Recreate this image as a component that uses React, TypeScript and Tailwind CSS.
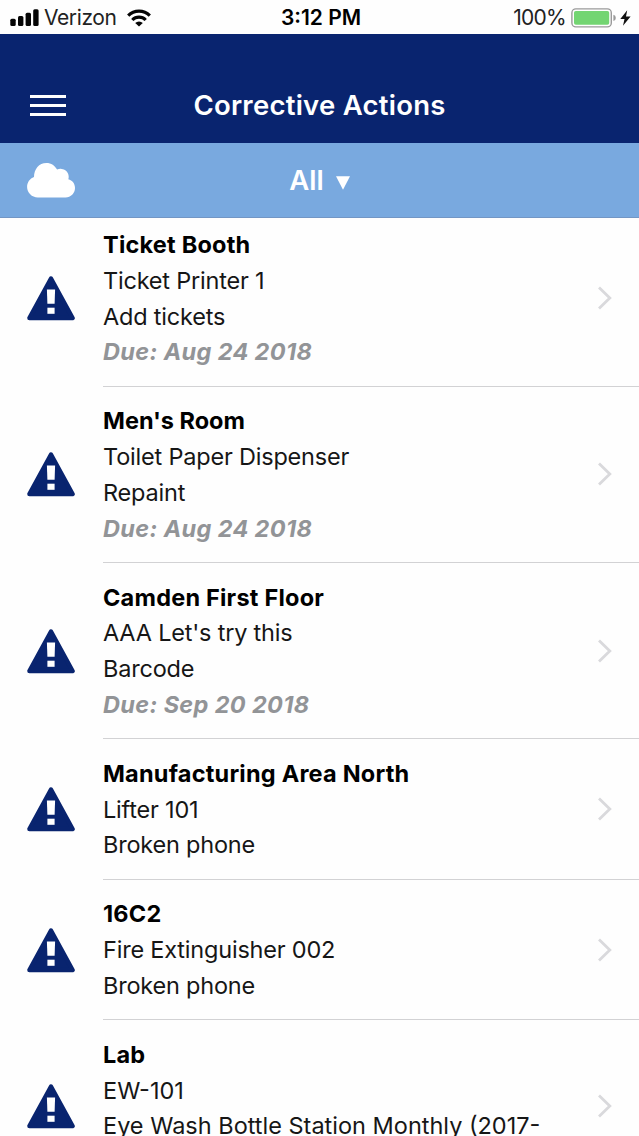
type Action = {
  title: string
  titleTracking?: string
  lines: string[]
  tracking?: string
  due?: string
  height: string
}

const ACTIONS: Action[] = [
  { title: 'Ticket Booth', lines: ['Ticket Printer 1', 'Add tickets'], due: 'Aug 24 2018', height: 'h-[176.25px]' },
  { title: "Men's Room", titleTracking: 'tracking-normal', lines: ['Toilet Paper Dispenser', 'Repaint'], due: 'Aug 24 2018', height: 'h-[176.25px]' },
  { title: 'Camden First Floor', lines: ["AAA Let's try this", 'Barcode'], due: 'Sep 20 2018', height: 'h-[176.25px]' },
  { title: 'Manufacturing Area North', lines: ['Lifter 101', 'Broken phone'], height: 'h-[140.5px]' },
  { title: '16C2', lines: ['Fire Extinguisher 002', 'Broken phone'], height: 'h-[140.5px]' },
  { title: 'Lab', lines: ['EW-101', 'Eye Wash Bottle Station Monthly (2017-'], tracking: 'tracking-normal', height: 'h-[173px]' },
]

function SignalIcon() {
  return (
    <svg width="30" height="18" viewBox="0 0 30 18" fill="#050505">
      <rect x="0.3" y="9.8" width="5.4" height="7.2" rx="1.5" />
      <rect x="8" y="7" width="5.4" height="10" rx="1.5" />
      <rect x="15.6" y="3.8" width="5.4" height="13.2" rx="1.5" />
      <rect x="23.2" y="0.3" width="5.4" height="16.7" rx="1.5" />
    </svg>
  )
}

function WifiIcon() {
  return (
    <svg width="24" height="18" viewBox="0 0 24 18" fill="none" stroke="#050505" strokeWidth="3.2">
      <path d="M1.2 6.6a15.2 15.2 0 0 1 21.6 0" />
      <path d="M5.3 11a9.4 9.4 0 0 1 13.4 0" />
      <path d="M12 17.6 8.2 14a5.4 5.4 0 0 1 7.6 0z" fill="#050505" stroke="none" />
    </svg>
  )
}

function BatteryIcon() {
  return (
    <svg width="46" height="20" viewBox="0 0 46 20">
      <rect x="0.9" y="0.9" width="39.4" height="18" rx="4" fill="none" stroke="#9a9a9a" strokeWidth="1.4" />
      <rect x="3" y="3" width="35.2" height="13.8" rx="1.8" fill="#73d572" />
      <path d="M42.4 6.8a3.2 3.2 0 0 1 0 6.2z" fill="#9a9a9a" />
    </svg>
  )
}

function BoltIcon() {
  return (
    <svg width="11" height="16" viewBox="0 0 11 16" fill="#111">
      <path d="M7.2 0.3 0.3 9h4.2L3 15.8 10.600 6.600H6z" />
    </svg>
  )
}

function CloudIcon() {
  return (
    <svg width="48" height="36" viewBox="0 0 48 36" fill="#fff">
      <path d="M10.8 35.4C4.9 35.4 0.1 30.8 0.1 25c0-4.6 2.7-8.4 6.9-10C7 7.2 12 1 19.4 1c4.900 0 8.500 2.600 10.700 6.600 1.400-.6 2.800-.9 4.400-.7 4.200.3 7.400 3.900 7.200 8.100 0 .8-.2 1.500-.4 2.200 4 .9 6.700 4.400 6.700 8.800 0 5.200-4.200 9.400-9.400 9.400z" />
    </svg>
  )
}

function WarningIcon() {
  return (
    <svg width="48" height="45" viewBox="0 0 48 45">
      <path d="M24 2.5 45.6 42H2.4z" fill="#09246f" stroke="#09246f" strokeWidth="4.4" strokeLinejoin="round" />
      <path d="M19.900 13.500h8.200l-.5 14.300h-7.200z" fill="#fff" />
      <rect x="20.400" y="31.700" width="7.200" height="6.100" fill="#fff" />
    </svg>
  )
}

function ChevronIcon() {
  return (
    <svg width="16" height="26" viewBox="0 0 16 26" fill="none" stroke="#d9d9dc" strokeWidth="2.8">
      <path d="m2 2.500 10.800 10.500L2 23.500" />
    </svg>
  )
}

function ActionRow({ action }: { action: Action }) {
  return (
    <li className={`flex shrink-0 ${action.height}`}>
      <div className="w-[103px] shrink-0 pl-[27px] flex items-center">
        <WarningIcon />
      </div>
      <div className="flex-1 min-w-0 flex border-b border-[#d2d2d4]">
        <div className="flex-1 min-w-0 pt-[16.6px] text-[23.5px] leading-[35.75px] whitespace-nowrap text-[#161616]">
          <p className={`font-bold text-black ${action.titleTracking ?? 'tracking-[0.22px]'}`}>{action.title}</p>
          {action.lines.map(line => (
            <p key={line} className={action.tracking ?? 'tracking-[-0.2px]'}>{line}</p>
          ))}
          {action.due && <p className="font-bold italic tracking-[0.35px] text-[#929497]">Due: {action.due}</p>}
        </div>
        <div className="w-[42px] flex items-center">
          <ChevronIcon />
        </div>
      </div>
    </li>
  )
}

export default function App() {
  return (
    <div className="w-[639px] h-[1136px] overflow-hidden flex flex-col bg-[#fefefe] font-['Inter','Liberation_Sans',sans-serif]">
      <div className="h-[34px] shrink-0 grid grid-cols-3 items-center pt-px text-[21px] text-[#222]">
        <div className="flex items-center pl-[10px]">
          <SignalIcon />
          <span className="ml-[4px] mr-[11px] tracking-[-0.4px]">Verizon</span>
          <WifiIcon />
        </div>
        <div className="pl-[3px] text-center font-semibold text-black">3:12 PM</div>
        <div className="flex items-center justify-end pr-[8px]">
          <span className="mr-[5px] tracking-[-0.7px]">100%</span>
          <BatteryIcon />
          <span className="ml-[3px]"><BoltIcon /></span>
        </div>
      </div>

      <header className="h-[109px] shrink-0 bg-[#09246f] grid grid-cols-[120px_1fr_120px] items-center pt-[33px] text-white">
        <button className="ml-[30px] w-[36px] flex flex-col gap-[6px]" aria-label="Menu">
          <span className="h-[3px] bg-white" />
          <span className="h-[3px] bg-white" />
          <span className="h-[3px] bg-white" />
        </button>
        <h1 className="pt-px text-center text-[27.5px] font-semibold tracking-[0.25px]">Corrective Actions</h1>
      </header>

      <div className="h-[75px] shrink-0 bg-[#79a9df] border-b border-[#7396c4] grid grid-cols-[120px_1fr_120px] items-center text-white">
        <div className="pl-[27px]"><CloudIcon /></div>
        <button className="flex items-center justify-center pt-px text-[27.5px] font-semibold">
          All
          <svg className="ml-[12px] mt-[4px]" width="14" height="14" viewBox="0 0 14 14" fill="#fff">
            <path d="M0 .3h14L7 13.700z" />
          </svg>
        </button>
      </div>

      <div className="flex-1 min-h-0 overflow-hidden">
        <ul className="-mt-[7.5px] flex flex-col">
          {ACTIONS.map(a => <ActionRow key={a.title} action={a} />)}
        </ul>
      </div>
    </div>
  )
}
